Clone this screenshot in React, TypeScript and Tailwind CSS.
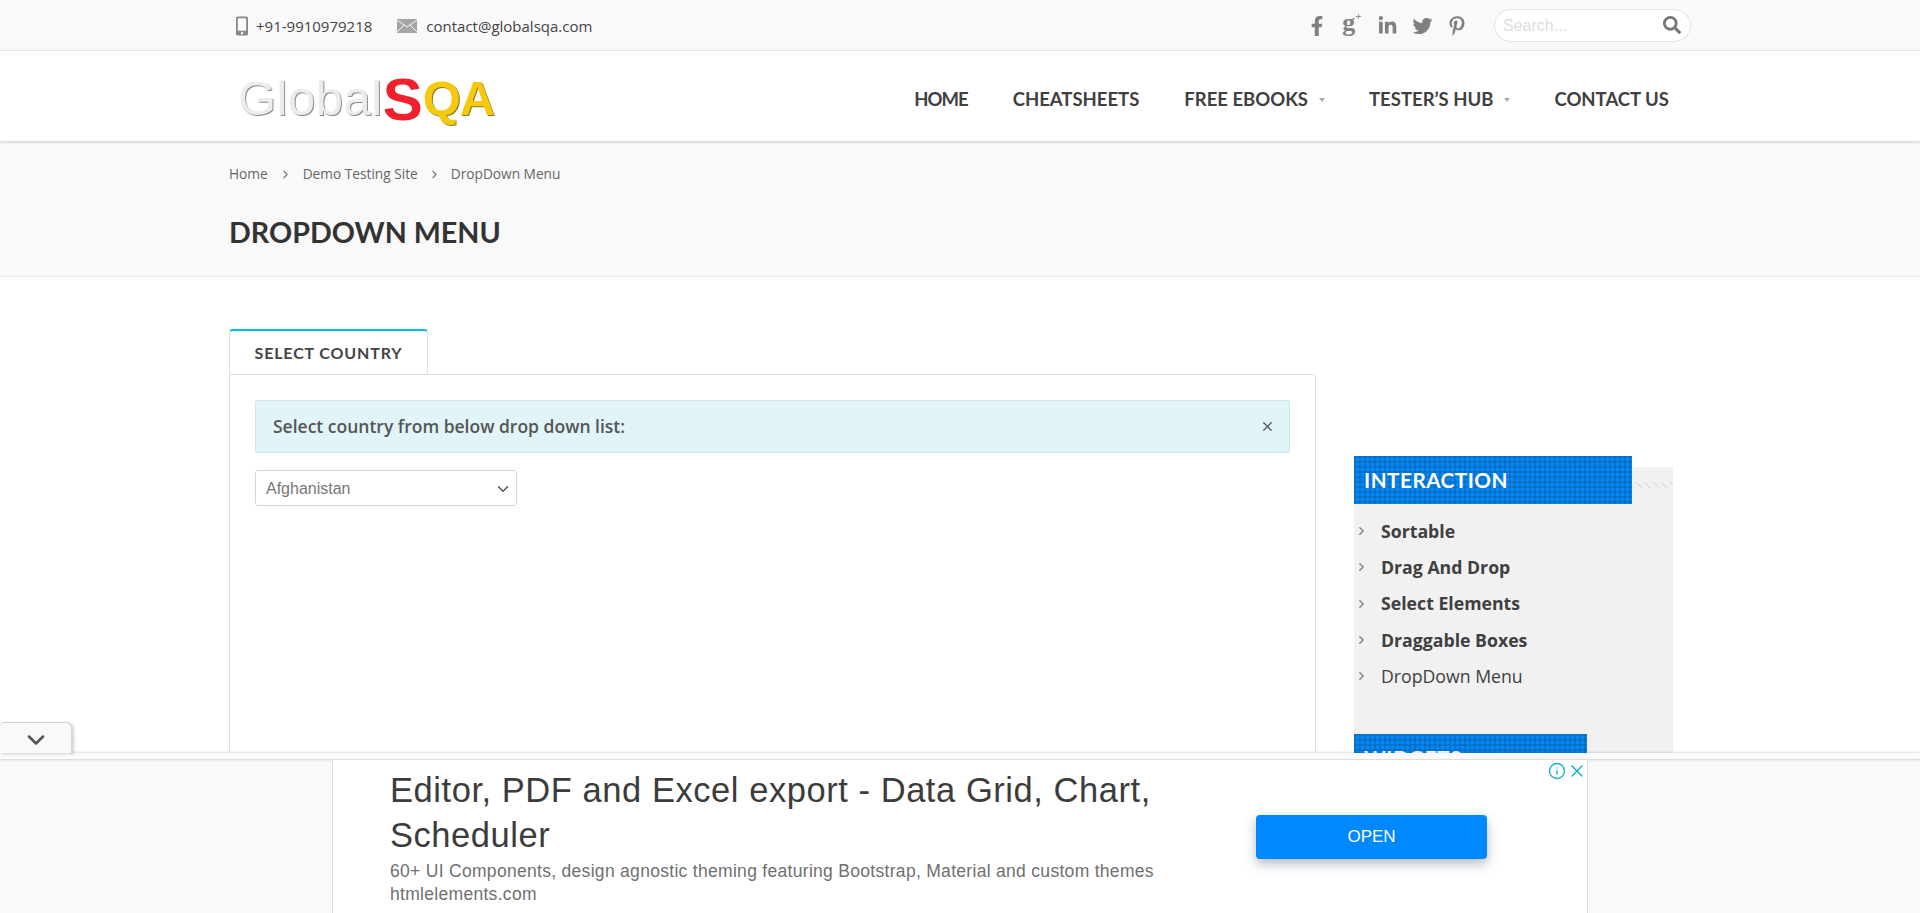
import { ChevronDown, ChevronRight, Info, X } from "lucide-react";
import { FaFacebookF, FaLinkedinIn, FaMobileAlt, FaPinterestP, FaSearch, FaTwitter } from "react-icons/fa";

const navItems = [
  { label: "HOME", tracking: "tracking-[-1px]" },
  { label: "CHEATSHEETS", tracking: "" },
  { label: "FREE EBOOKS", tracking: "", caret: true },
  { label: "TESTER’S HUB", tracking: "", caret: true },
  { label: "CONTACT US", tracking: "" },
];

const sideLinks = [
  { label: "Sortable", bold: true },
  { label: "Drag And Drop", bold: true },
  { label: "Select Elements", bold: true },
  { label: "Draggable Boxes", bold: true },
  { label: "DropDown Menu", bold: false },
];

function BlueHeading({ title, width }: { title: string; width: string }) {
  return (
    <div
      className={`${width} h-[48px] pl-[10px] flex items-center bg-[#0088ff] bg-[linear-gradient(rgba(16,100,160,0.5)_2px,transparent_2px),linear-gradient(90deg,rgba(16,100,160,0.5)_2px,transparent_2px)] bg-[length:5px_5px] text-white text-[20.7px] leading-none font-bold tracking-[0.5px] font-['Lato',sans-serif]`}
    >
      {title}
    </div>
  );
}

function TopBar() {
  return (
    <div className="h-[51px] bg-[#f9f9f9] border-b border-[#ececec]">
      <div className="w-[1462px] mx-auto h-[50px] pt-[2px] flex items-center justify-between">
        <div className="flex items-center text-[15px] text-[#444] pl-[7px]">
          <FaMobileAlt className="text-[#888] text-[20px] w-[12px] mr-[8px]" />
          <span>+91-9910979218</span>
          <svg width="20" height="14" viewBox="0 0 20 14" className="ml-[25px] mr-[9px]">
            <rect width="20" height="14" fill="#a5a5a5" />
            <path d="M0 1 L10 8 L20 1 M0 13 L7 6 M20 13 L13 6" stroke="#f4f4f4" strokeWidth="1" fill="none" />
          </svg>
          <span>contact@globalsqa.com</span>
        </div>
        <div className="flex items-center">
          <div className="flex items-center text-[#808080] text-[20px] gap-[14px] mr-[27px]">
            <FaFacebookF className="w-[20px]" />
            <span className="w-[22px] flex items-start justify-center leading-none text-[26px] font-bold font-['Liberation_Serif',serif] pb-[6px]">
              g<span className="text-[11px] mt-[1px]">+</span>
            </span>
            <FaLinkedinIn className="w-[21px]" />
            <FaTwitter className="w-[21px]" />
            <FaPinterestP className="w-[20px]" />
          </div>
          <div className="w-[197px] h-[33px] mb-[2px] rounded-full bg-white border border-[#e3e3e3] flex items-center justify-between pl-[8px] pr-[9px]">
            <span className="pt-[1px] text-[16px] text-[#dddddd] font-['Liberation_Sans',sans-serif]">Search...</span>
            <FaSearch size={18} className="text-[#777]" />
          </div>
        </div>
      </div>
    </div>
  );
}

function Header() {
  return (
    <div className="relative z-10 h-[90px] bg-white shadow-[0_1px_3px_rgba(0,0,0,0.2)]">
      <div className="w-[1462px] mx-auto h-full flex items-center justify-between">
        <div className="pl-[9px] pb-[2px] flex items-baseline text-[49px] leading-none font-['Liberation_Sans',sans-serif] select-none">
          <span className="text-[#ececec] [text-shadow:1px_1px_0_#8a8a8a] tracking-[0.5px]">Global</span>
          <span className="relative top-[5px] text-[#f0202c] font-bold text-[60px] leading-none">S</span>
          <span className="text-[#f6c90e] font-bold [text-shadow:1px_1px_0_#8a7a20] tracking-[-1px]">QA</span>
        </div>
        <nav className="flex items-center gap-[45px] pr-[22px] pt-[8px] text-[18.5px] font-bold text-[#404040] font-['Lato',sans-serif]">
          {navItems.map((item) => (
            <div key={item.label} className="flex items-center">
              <span className={item.tracking}>{item.label}</span>
              {item.caret && <span className="ml-[11px] w-0 h-0 border-x-[3px] border-x-transparent border-t-[4px] border-t-[#aaa] mr-[-1px]" />}
            </div>
          ))}
        </nav>
      </div>
    </div>
  );
}

function PageTitle() {
  return (
    <div className="h-[136px] bg-[#f9f9f9] border-b border-[#ececec]">
      <div className="w-[1462px] mx-auto">
        <div className="pt-[23px] flex items-center text-[13.7px] text-[#666] leading-[20px]">
          <span>Home</span>
          <ChevronRight size={13} className="mx-[11px] text-[#777]" />
          <span>Demo Testing Site</span>
          <ChevronRight size={13} className="mx-[10px] text-[#777]" />
          <span>DropDown Menu</span>
        </div>
        <h1 className="mt-[30px] text-[28.7px] leading-[36px] font-bold text-[#333] font-['Lato',sans-serif]">DROPDOWN MENU</h1>
      </div>
    </div>
  );
}

function MainPanel() {
  return (
    <div className="w-[1087px] pt-[52px]">
      <div className="w-[199px] h-[45px] bg-white border-x border-[#e0e0e0] border-t-2 border-t-[#00c0e8] rounded-t-[4px] flex items-center justify-center text-[16px] font-bold text-[#444] tracking-[0.85px] font-['Lato',sans-serif]">
        SELECT COUNTRY
      </div>
      <div className="h-[500px] border border-[#e0e0e0] rounded-tr-[3px] pt-[25px] px-[25px]">
        <div className="h-[53px] bg-[#e1f4f7] border border-[#cce8ec] rounded-[2px] flex items-center justify-between pl-[17px] pr-[14px] text-[17.5px] font-semibold text-[#555]">
          <span>Select country from below drop down list:</span>
          <X size={15} strokeWidth={2} className="text-[#555]" />
        </div>
        <div className="mt-[17px] w-[262px] h-[36px] pt-[1px] bg-white border border-[#d8d8d8] rounded-[3px] flex items-center justify-between pl-[10px] pr-[4px] text-[16px] text-[#777] font-['Liberation_Sans',sans-serif]">
          <span>Afghanistan</span>
          <ChevronDown size={18} strokeWidth={2} className="text-[#555]" />
        </div>
      </div>
    </div>
  );
}

function Sidebar() {
  return (
    <div className="w-[319px] pt-[179px]">
      <div className="relative bg-[#f1f1f1] h-[400px] mt-[11px]">
        <div className="absolute top-[15px] right-0 w-[41px] h-[6px] bg-[repeating-linear-gradient(45deg,#e4e4e4_0,#e4e4e4_2px,transparent_2px,transparent_6px)]" />
        <div className="mt-[-11px] absolute top-0 left-0 w-full">
          <BlueHeading title="INTERACTION" width="w-[278px]" />
          <ul className="pt-[9px]">
            {sideLinks.map((link) => (
              <li key={link.label} className="h-[36.3px] flex items-center text-[17.7px] text-[#404040]">
                <ChevronRight size={14} strokeWidth={3} className="text-[#888] ml-[1px] mr-[12px] w-[13px]" />
                <span className={`ml-[1px] ${link.bold ? "font-bold" : "font-normal"}`}>{link.label}</span>
              </li>
            ))}
          </ul>
          <div className="mt-[40px]">
            <BlueHeading title="WIDGETS" width="w-[233px]" />
          </div>
        </div>
      </div>
    </div>
  );
}

function BottomAd() {
  return (
    <div className="fixed bottom-0 left-0 right-0 z-20 h-[160px] bg-[#f9f9f9] shadow-[0_-1px_2px_rgba(0,0,0,0.12)]">
      <div className="absolute left-0 top-[-31px] w-[72px] h-[31px] pt-[3px] bg-[#f9f9f9] border-t border-r border-[#d4d4d4] rounded-tr-[6px] rounded-tl-[4px] shadow-[2px_1px_3px_rgba(0,0,0,0.18)] flex items-center justify-center">
        <ChevronDown size={28} strokeWidth={2.2} className="text-[#555]" />
      </div>
      <div className="h-[7px] bg-[#fafafa] border-b border-[#dddddd] shadow-[0_1px_2px_rgba(0,0,0,0.08)]" />
      <div className="relative ml-[332px] w-[1256px] h-[153px] bg-white border-x border-[#e0e0e0] flex justify-between font-['Liberation_Sans',sans-serif]">
        <div className="pl-[57px] pt-[8px] w-[840px]">
          <p className="text-[34.5px] leading-[45px] text-[#3c3c3c] tracking-[0.55px]">Editor, PDF and Excel export - Data Grid, Chart, Scheduler</p>
          <p className="mt-[2px] text-[17.5px] leading-[23px] text-[#707070] tracking-[0.3px]">60+ UI Components, design agnostic theming featuring Bootstrap, Material and custom themes</p>
          <p className="text-[17.5px] leading-[23px] text-[#707070] tracking-[0.3px]">htmlelements.com</p>
        </div>
        <div className="pr-[100px] pt-[55px]">
          <div className="w-[231px] h-[44px] bg-[#0088ff] rounded-[4px] shadow-[0_5px_12px_rgba(40,60,90,0.35)] flex items-center justify-center text-white text-[17px]">OPEN</div>
        </div>
        <div className="absolute top-[1px] right-0 flex items-center gap-[1px] text-[#14b4d4]">
          <Info size={18} strokeWidth={1.8} />
          <X size={20} strokeWidth={1.8} />
        </div>
      </div>
    </div>
  );
}

export default function App() {
  return (
    <div className="h-screen overflow-hidden bg-white font-['Open_Sans',sans-serif]">
      <TopBar />
      <Header />
      <PageTitle />
      <div className="w-[1462px] mx-auto flex gap-[38px]">
        <MainPanel />
        <Sidebar />
      </div>
      <BottomAd />
    </div>
  );
}
